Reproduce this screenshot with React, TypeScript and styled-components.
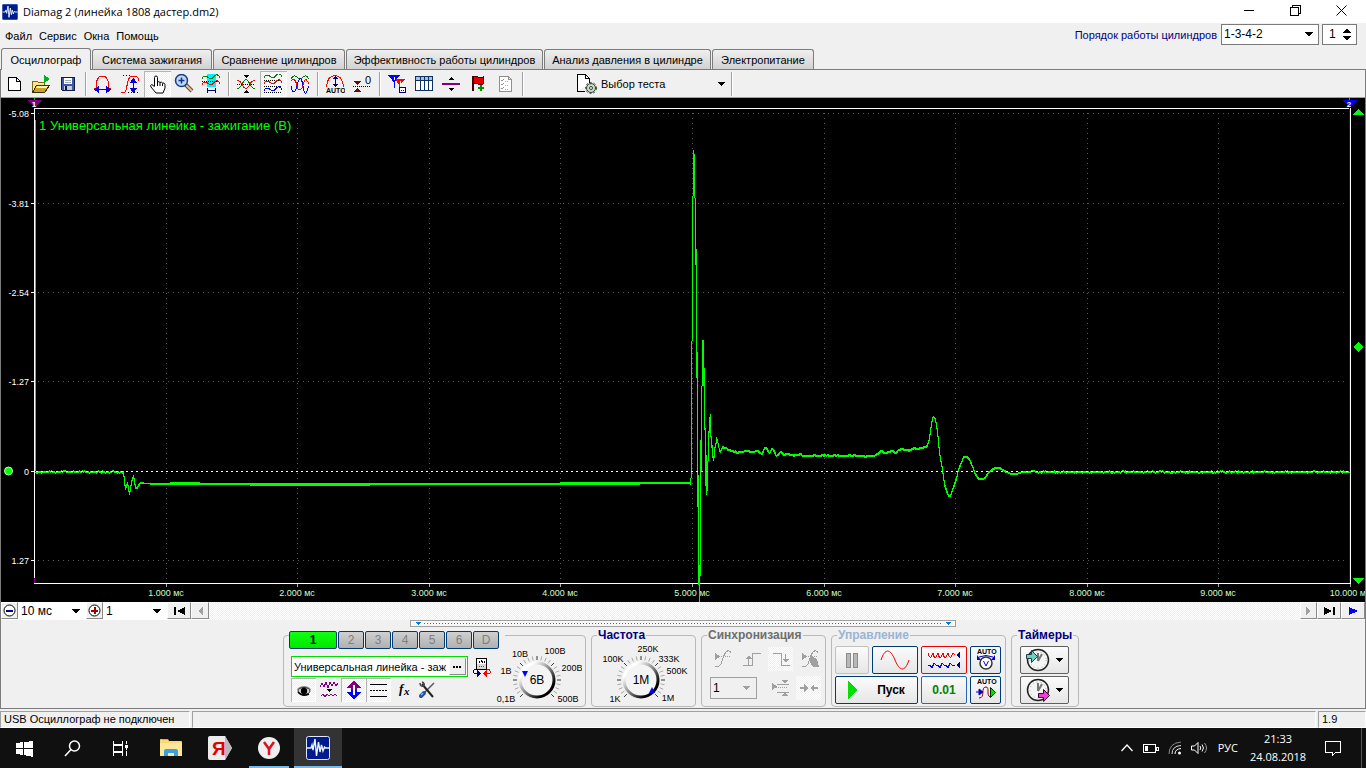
import React from "react";
import styled, { createGlobalStyle, css } from "styled-components";

const GlobalStyle = createGlobalStyle`
  *, *::before, *::after { box-sizing: border-box; }
  body { margin: 0; background: #f0f0f0; }
  button, input, select { font: inherit; color: inherit; }
`;

const hatch = css`
  background: repeating-conic-gradient(#ffffff 0 25%, #efefef 0 50%) 0 0 / 2px 2px;
`;
const sunken = css`
  ${hatch}
  box-shadow: inset 1px 1px 0 #b4b4b4, inset -1px -1px 0 #fff;
`;

const Window = styled.div`
  display: flex;
  flex-direction: column;
  min-height: 100vh;
  background: #f0f0f0;
  color: #000;
  font: 11px/14px "Liberation Sans", Arial, sans-serif;
`;

/* ---------- title bar ---------- */
const TitleBar = styled.header`
  display: flex;
  align-items: center;
  height: 23px;
  padding: 0 17px 0 2px;
  background: #fff;
`;
const Title = styled.h1`
  flex: 1;
  margin: 0 0 0 5px;
  font: 400 11px/16px "Open Sans", sans-serif;
`;
const CaptionButtons = styled.div`
  display: flex;
  gap: 30px;
  padding-bottom: 2px;
`;
const PlainButton = styled.button`
  display: flex;
  align-items: center;
  justify-content: center;
  padding: 0;
  border: 0;
  background: none;
`;
const CaptionButton = styled(PlainButton)`
  width: 16px;
  height: 20px;
`;

/* ---------- menu ---------- */
const MenuBar = styled.div`
  display: flex;
  align-items: center;
  justify-content: space-between;
  height: 25px;
  padding: 0 9px 0 5px;
`;
const Menu = styled.nav`
  display: flex;
  gap: 7px;
`;
const Order = styled.div`
  display: flex;
  align-items: center;
  gap: 3px;
  padding-bottom: 3px;
`;
const OrderLabel = styled.label`
  padding: 2px 1px 0 0;
  color: #000080;
`;
const Drop = styled.span<{ $w: number; $h: number; $line?: string; $bg?: string }>`
  display: inline-grid;
  grid-template-columns: 1fr 13px;
  align-items: center;
  width: ${(p) => p.$w}px;
  height: ${(p) => p.$h}px;
  border: 1px solid ${(p) => p.$line || "#7a7a7a"};
  background: ${(p) => p.$bg || "#fff"};
  & > select {
    grid-area: 1 / 1 / 2 / 3;
    width: 100%;
    height: 100%;
    padding: 0 0 0 2px;
    border: 0;
    background: none;
    appearance: none;
    color: #000;
    font-size: 12px;
  }
  & > svg { grid-area: 1 / 2; pointer-events: none; }
`;
const Spin = styled.span`
  display: flex;
  align-items: center;
  width: 35px;
  height: 21px;
  border: 1px solid #7a7a7a;
  background: #fff;
  & > input {
    width: 20px;
    padding: 0 0 0 6px;
    border: 0;
    background: none;
    font-size: 12px;
  }
`;

/* ---------- tabs ---------- */
const Tabs = styled.div`
  display: flex;
  align-items: flex-end;
  gap: 1px;
  height: 22px;
  padding-left: 1px;
  border-bottom: 1px solid #7c7c7c;
`;
const Tab = styled.button<{ $w: number; $on?: boolean }>`
  width: ${(p) => p.$w}px;
  height: ${(p) => (p.$on ? 22 : 20)}px;
  margin-bottom: ${(p) => (p.$on ? -1 : 0)}px;
  padding: 0;
  border: 1px solid #7c7c7c;
  border-bottom: 0;
  border-radius: 3px 3px 0 0;
  background: ${(p) => (p.$on ? "#f0f0f0" : "linear-gradient(#efefef, #d2d2d2)")};
  white-space: nowrap;
`;
const Frame = styled.main`
  display: flex;
  flex: 1;
  flex-direction: column;
  border: solid #7c7c7c;
  border-width: 0 1px 1px;
`;

/* ---------- toolbar ---------- */
const Toolbar = styled.div`
  display: flex;
  align-items: center;
  height: 28px;
  padding-top: 1px;
  border-bottom: 1px solid #a0a0a0;
`;
const Tool = styled(PlainButton)<{ $on?: boolean }>`
  width: 27px;
  height: 26px;
  padding-right: 1px;
  ${(p) => p.$on && sunken}
`;
const Sep = styled.i`
  width: 2px;
  height: 24px;
  margin: 0 3px;
  border-left: 1px solid #a0a0a0;
  border-right: 1px solid #fff;
`;
const TestButton = styled(PlainButton)`
  width: 152px;
  height: 26px;
  margin-left: 49px;
  padding: 0 3px 0 1px;
  gap: 4px;
  & > span { flex: 1; text-align: left; }
`;
const Chart = styled.svg`
  display: block;
  width: 100%;
  height: auto;
  background: #000;
`;

/* ---------- time navigation ---------- */
const NavRow = styled.div`
  display: flex;
  height: 18px;
  background: #fff;
`;
const Raised = styled(PlainButton)<{ $w: number }>`
  flex: none;
  width: ${(p) => p.$w}px;
  height: 17px;
  border: 1px solid;
  border-color: #fff #8a8a8a #8a8a8a #fff;
  background: #f0f0f0;
`;
const Track = styled.div`
  flex: 1;
  ${hatch}
`;

/* ---------- control panels ---------- */
const Panels = styled.div`
  display: flex;
  flex: 1;
  flex-direction: column;
  align-items: center;
`;
const Splitter = styled.div`
  display: flex;
  align-items: center;
  justify-content: space-between;
  width: 40%;
  height: 7px;
  padding: 0 4px;
  border: 1px solid #a0a0a0;
  background: #f7f7f7;
`;
const Dots = styled.span`
  flex: 1;
  height: 1px;
  margin: 0 3px;
  background: repeating-linear-gradient(90deg, #0078d7 0 1px, transparent 1px 3px);
`;
const Groups = styled.div`
  display: flex;
  gap: 5px;
  padding: 2px 4px 0 0;
`;
const Group = styled.fieldset<{ $w: number }>`
  display: flex;
  width: ${(p) => p.$w}px;
  height: 78px;
  min-width: 0;
  margin: 0;
  padding: 0;
  border: 1px solid #b9b9b9;
  border-radius: 4px;
`;
const Legend = styled.legend<{ $ink: string }>`
  height: 13px;
  margin-left: 5px;
  padding: 0 1px;
  color: ${(p) => p.$ink};
  font: bold 12px/13px "Liberation Sans", Arial, sans-serif;
  white-space: nowrap;
`;
const Channels = styled(Legend)`
  display: flex;
  gap: 1px;
  padding: 2px 6px 0 0;
`;
const Channel = styled.button<{ $on?: boolean }>`
  flex: none;
  width: ${(p) => (p.$on ? 48 : 26)}px;
  height: 18px;
  padding: 0;
  border: 1px solid #003c74;
  border-radius: 2px;
  background: ${(p) => (p.$on ? "linear-gradient(#10ff10, #00e800)" : "linear-gradient(#d0d0d0, #b0b0b0)")};
  color: ${(p) => (p.$on ? "#000" : "#808080")};
  font-weight: ${(p) => (p.$on ? 700 : 400)};
`;
const Column = styled.div<{ $gap?: number; $pad?: string }>`
  display: flex;
  flex-direction: column;
  gap: ${(p) => p.$gap || 0}px;
  padding: ${(p) => p.$pad || 0};
`;
const Row = styled.div<{ $gap?: number }>`
  display: flex;
  align-items: center;
  gap: ${(p) => p.$gap || 0}px;
`;
const Probe = styled.span`
  display: flex;
  align-items: center;
  gap: 3px;
  width: 177px;
  height: 21px;
  padding: 0 1px 0 2px;
  border: 1px solid #00e000;
  background: #fff;
  & > input {
    flex: 1;
    min-width: 0;
    padding: 0;
    border: 0;
    background: none;
  }
`;
const SmallTool = styled(PlainButton)<{ $on?: boolean; $flat?: boolean; $w?: number }>`
  width: ${(p) => p.$w || 25}px;
  height: 24px;
  ${(p) => p.$on && (p.$flat ? hatch : sunken)}
`;
const Push = styled.button<{ $w: number; $line: string; $ink?: string }>`
  display: flex;
  align-items: center;
  justify-content: center;
  width: ${(p) => p.$w}px;
  height: 28px;
  padding: 0;
  border: 1px solid ${(p) => p.$line};
  border-radius: 2px;
  background: linear-gradient(#fbfbfb, #e6e6e6);
  color: ${(p) => p.$ink || "#000"};
  font-size: 12px;
  font-weight: 700;
`;

/* ---------- status bar ---------- */
const StatusBar = styled.footer`
  display: flex;
  gap: 2px;
  height: 19px;
  padding-top: 2px;
`;
const Cell = styled.div<{ $w?: number }>`
  ${(p) => (p.$w ? `width: ${p.$w}px` : "flex: 1")};
  padding: 0 3px;
  border: 1px solid;
  border-color: #a0a0a0 #fff #fff #a0a0a0;
  line-height: 15px;
  white-space: nowrap;
`;

/* ---------- task bar ---------- */
const TaskBar = styled.nav`
  display: flex;
  align-items: center;
  height: 40px;
  background: #101010;
  color: #fff;
  font: 11px/18px "Open Sans", sans-serif;
`;
const Apps = styled.div`
  display: flex;
  flex: 1;
  gap: 1px;
`;
const Task = styled(PlainButton)<{ $active?: boolean; $open?: boolean }>`
  position: relative;
  width: 48px;
  height: 40px;
  background: ${(p) => (p.$active ? "#333" : "none")};
  &::after {
    content: "";
    display: ${(p) => (p.$active || p.$open ? "block" : "none")};
    position: absolute;
    bottom: 0;
    left: ${(p) => (p.$active ? 0 : 4)}px;
    right: ${(p) => (p.$active ? 0 : 4)}px;
    height: 2px;
    background: #76b9ed;
  }
`;
const SystemTasks = styled.div`
  display: flex;
  width: 146px;
`;
const Tray = styled.div`
  display: flex;
  align-items: center;
  height: 40px;
  gap: 9px;
`;
const Clock = styled.time`
  width: 62px;
  text-align: center;
`;
const NoticeButton = styled(PlainButton)`
  padding-left: 7px;
`;
const ShowDesktop = styled(PlainButton)`
  width: 5px;
  height: 40px;
  margin-left: 10px;
  border-left: 1px solid #555;
`;

/* ---------- icons ---------- */
type IcoProps = { w?: number; h?: number; smooth?: boolean; children: React.ReactNode };
const Ico = ({ w = 20, h = 20, smooth, children }: IcoProps) => (
  <svg width={w} height={h} viewBox={`0 0 ${w} ${h}`} fill="none" aria-hidden="true" shapeRendering={smooth ? "auto" : "crispEdges"}>
    {children}
  </svg>
);
const Down = () => <Ico w={8} h={5}><path d="M0 0h8L4 5z" fill="#000" /></Ico>;
const SmallDown = ({ c = "#000" }: { c?: string }) => <Ico w={7} h={4}><path d="M0 0h7L3.500 4z" fill={c} /></Ico>;
const AppIcon = ({ s = 16 }: { s?: number }) => (
  <svg width={s} height={s} viewBox="0 0 24 24" fill="none" aria-hidden="true">
    <rect x="0.500" y="0.500" width="23" height="23" rx="2" fill="#001c8c" stroke={s > 16 ? "#dfe8ff" : "#3050b0"} />
    <path d="M1 12h4l1-3 1 5 2-11 1.500 17 2-14 1.500 10 1.500-7 1.500 6 1.500-4 1 1h4" stroke="#e8f4ff" strokeWidth="1.400" />
  </svg>
);

const wave = (y: number, c: string) => (
  <path d={`M1 ${y + 2}.5c2-3 4-3 6-1s4 2 6-1 4-2 6 1`} stroke={c} />
);
const dots = (y: number) => <path d={`M1 ${y}.5h18`} stroke="#000" strokeDasharray="1 1" />;
const tiny = { fontFamily: "Liberation Sans, Arial, sans-serif", fontWeight: 700 };

const IcoNew = () => <Ico><path d="M4.500 3.500h8l4 4v9h-12z" fill="#fff" stroke="#000" /><path d="M12.500 3.500v4h4" stroke="#000" /></Ico>;
const IcoOpen = () => (
  <Ico>
    <path d="M1.500 17V7.500h5l1 1h6V11" fill="#ffe58a" stroke="#7a6a20" />
    <path d="M1.500 18.500l4-7h13l-5 7z" fill="#c8a030" stroke="#3a3000" />
    <path d="M6 12h11l-1 2H5z" fill="#fff3b0" />
    <path d="M13 1l6 4-6 4z" fill="#00b020" />
  </Ico>
);
const IcoSave = () => (
  <Ico>
    <path d="M3.500 3.500h13v13h-12l-1-1z" fill="#3c5aa8" stroke="#101c48" />
    <path d="M6 4h8v6H6z" fill="#fff" /><path d="M7 6.500h6M7 8.500h6" stroke="#9ab" />
    <path d="M6 12h8v4H6z" fill="#c8ccd8" /><path d="M7 12h2v4H7z" fill="#101c48" />
  </Ico>
);
const IcoBell = () => (
  <Ico>
    <path d="M1 14.500h2C3 7 4 2 9 2s7 5 7 12.500h2" stroke="#f00" />
    <path d="M2 15.500h15" stroke="#0000e0" /><path d="M1 15.500l5-4v8zM18 15.500l-5-4v8z" fill="#0000e0" />
  </Ico>
);
const IcoStep = () => (
  <Ico>
    <path d="M1 18.500h3C8 18 6 4 11 2.500h4q3 0 4 4" stroke="#f00" />
    <path d="M3 1.500h8M8 18.500h11" stroke="#000" strokeDasharray="1 2" />
    <path d="M13.500 5v12" stroke="#0000e0" /><path d="M13.500 4l4 5h-8zM13.500 19l4-5h-8z" fill="#0000e0" />
  </Ico>
);
const IcoHand = () => (
  <Ico smooth>
    <path d="M7.500 12V3.500q0-1.500 1.500-1.500t1.500 1.500V8q1.500-1 2.500.500 1.500-1 2.500.500 2-.5 2.500 1.500V14l-2 5h-7L4 13q-1-2 .5-2.300T7.500 13" fill="#fff" stroke="#000" />
    <path d="M10.500 8v4M13 8.500V12M15.500 9.500V12" stroke="#000" />
  </Ico>
);
const IcoZoom = () => (
  <Ico smooth>
    <path d="M11 10l7 7" stroke="#5a4a3a" strokeWidth="4" /><path d="M12 11l6 6" stroke="#e8c090" strokeWidth="2" />
    <circle cx="7.500" cy="6.500" r="6" fill="#b9dcf4" stroke="#1c3c80" strokeWidth="1.500" />
    <path d="M4.500 6.500h6M7.500 3.500v6" stroke="#1030a0" strokeWidth="1.500" />
  </Ico>
);
const IcoSpan = () => (
  <Ico>
    <path d="M6 0h9v13H6z" fill="#00f0ff" />
    {wave(2, "#008000")}{dots(7)}{wave(8, "#f00")}
    <path d="M6.500 14v5M14.500 14v5M7 16.500h8" stroke="#000080" />
  </Ico>
);
const IcoCross = () => (
  <Ico>
    <path d="M1 6.500c6 0 5 8 9 8s3-8 9-8" stroke="#f00" /><path d="M1 14.500c6 0 5-9 9-9s3 9 9 9" stroke="#008000" />
    {dots(10)}<path d="M7 1h6l-3 3zM7 19h6l-3-3z" fill="#000" />
  </Ico>
);
const IcoThree = () => <Ico>{wave(1, "#008000")}{dots(6)}{wave(7, "#f00")}{dots(12)}{wave(14, "#0000ff")}{dots(18)}</Ico>;
const IcoMix = () => (
  <Ico>
    <path d="M1 5q3-5 6-2t6 0 6 2" stroke="#008000" />
    <path d="M1 7c3-4 5 0 6 5s4 6 6-1 3-7 6-1" stroke="#f00" />
    <path d="M1 12c1 8 4 8 6 0s4-12 6 0 3 7 6 0" stroke="#00f" />
  </Ico>
);
const IcoAuto = () => (
  <Ico>
    <path d="M1.500 13C2 7 4 1.500 10 1.500S18 7 18.500 13" stroke="#f00" />
    <path d="M10.500 3v9" stroke="#000080" /><path d="M10.500 2l3 3h-6zM10.500 13l3-3h-6z" fill="#000080" />
    <text x="1" y="19" fontSize="7" fill="#000" {...tiny}>AUTO</text>
  </Ico>
);
const IcoZero = () => (
  <Ico>
    <path d="M1 7h8l-4 4zM1 18h8l-4-4z" fill="#800000" />{dots(12)}
    <text x="13" y="10" fontSize="11" fill="#000" fontFamily="Liberation Sans, Arial, sans-serif">0</text>
  </Ico>
);
const IcoMarks = () => (
  <Ico>
    <path d="M8 5h10l-5 6v5h-1v-5z" fill="#f00" /><path d="M1 1h12L7.500 8v6h-1V8z" fill="#00f" />
    <path d="M7 3v3M13 7v3" stroke="#fff" /><path d="M12.500 13.500h6v5h-6z" fill="#fff" stroke="#000080" /><path d="M14 16.500h3" stroke="#000080" strokeDasharray="1 1" />
  </Ico>
);
const IcoTable = () => (
  <Ico>
    <path d="M1.500 2.500h17v14h-17z" fill="#fff" stroke="#103060" /><path d="M2 3h16v3H2z" fill="#9cc4ee" />
    <path d="M2 6.500h16M6.500 3v13M10.500 3v13M14.500 3v13" stroke="#103060" />
  </Ico>
);
const IcoLine = () => <Ico><path d="M1 9h18v2H1z" fill="#800080" /><path d="M7 6h6l-3-3zM7 14h6l-3 3z" fill="#000" /></Ico>;
const IcoFlag = () => (
  <Ico>
    <path d="M4.500 2v15" stroke="#400" strokeWidth="2" /><path d="M5 3q3-2 5 0t5 0v7q-3 2-5 0t-5 0z" fill="#e00000" stroke="#500" />
    <path d="M10 14h6M13 11v6" stroke="#009000" strokeWidth="2" />
  </Ico>
);
const IcoCheck = () => (
  <Ico>
    <path d="M4.500 2.500h9l3 3v12h-12z" fill="#fff" stroke="#909090" /><path d="M13.500 2.500v3h3" stroke="#909090" />
    <path d="M6 6l1 1 2-2M6 10l1 1 2-2M6 14l1 1 2-2" stroke="#909090" /><path d="M10 7.500h4M10 11.500h4M10 15.500h4" stroke="#b0b0b0" strokeDasharray="1 1" />
  </Ico>
);
const IcoTest = () => (
  <Ico smooth>
    <path d="M.5 17.500V.5h8l4 4V9M.5 17.500H8" fill="#fff" stroke="#000" shapeRendering="crispEdges" /><path d="M8.500.5v4h4" stroke="#000" shapeRendering="crispEdges" />
    <circle cx="14" cy="14" r="4.500" fill="#c8dcc8" stroke="#304030" strokeWidth="1" />
    <circle cx="14" cy="14" r="5.500" stroke="#304030" strokeDasharray="2 2" /><circle cx="14" cy="14" r="1.500" fill="#fff" stroke="#304030" />
  </Ico>
);
const IcoSign = ({ plus }: { plus?: boolean }) => (
  <Ico w={15} h={15}>
    <circle cx="7.500" cy="7.500" r="5.500" fill="#fff" stroke="#000" shapeRendering="auto" />
    <path d="M4 7h7v2H4z" fill={plus ? "#a00000" : "#000080"} />
    {plus && <path d="M7 4h2v7H7z" fill="#a00000" />}
  </Ico>
);

const IcoProbe = () => (
  <Ico>
    <path d="M4.500 1.500h10v11h-10z" fill="#d8d8d8" stroke="#000" /><path d="M5 2h9v5H5z" fill="#fff" /><path d="M7 6V4h1M9 3l2 3M12 4v2" stroke="#000" />
    <path d="M7 9.500h5" stroke="#555" strokeDasharray="1 1" />
    <path d="M4 12.500H2.500q-2 3 0 4H6" stroke="#000080" /><path d="M5 13v7l4-3.500z" fill="#000080" />
    <path d="M15 12.500h2q3 3 0 4h-3" stroke="#f00" /><path d="M15 13v7l-4-3.500z" fill="#f00" />
  </Ico>
);
const IcoEye = () => (
  <Ico smooth>
    <path d="M4 8q6-4 12 0l1 2H3z" fill="#8a8a7a" /><ellipse cx="10" cy="11" rx="6" ry="3.500" fill="#d8d8d8" stroke="#333" />
    <circle cx="10" cy="11" r="3.200" fill="#000" /><path d="M4 12q4 5 11 2" stroke="#000" strokeWidth="1.500" />
  </Ico>
);
const IcoCompare = () => (
  <Ico>
    <path d="M1 7l2-4 2 4 2-5 2 6 2-6 2 4 2-4 2 4 2-3" stroke="#800080" /><path d="M2 16l2-2 2 3 2-3 2 2 2-2 2 2 2-2 2 2" stroke="#800080" />
    <path d="M8 9h5l-2.500 3z" fill="#000" />
  </Ico>
);
const IcoUpDown = () => (
  <Ico>
    <path d="M10 0l7 8h-4v2H7V8H3z" fill="#800080" /><path d="M10 20l7-8h-4v-2H7v2H3z" fill="#00f" /><path d="M10 5v10" stroke="#fff" strokeWidth="2" />
  </Ico>
);
const IcoLines = () => <Ico><path d="M1 4.500h17M1 16.500h17" stroke="#000" /><path d="M1 10.500h17" stroke="#000" strokeDasharray="2 1" /></Ico>;
const IcoTools = () => (
  <Ico smooth>
    <path d="M17 3L7 13" stroke="#555" strokeWidth="1.500" /><path d="M7 13l-3 3" stroke="#2050a0" strokeWidth="4" strokeLinecap="round" /><path d="M6 13l-2 2" stroke="#8ab4f0" strokeWidth="1.500" />
    <path d="M5 4l11 13" stroke="#222" strokeWidth="2" /><path d="M3 3q0 4 4 3M5 2q3 1 2 4" stroke="#444" strokeWidth="1.500" />
  </Ico>
);
const SG = "#a0a0a0";
const IcoSyncWave = ({ hand }: { hand?: boolean }) => (
  <Ico>
    <path d="M2 4l5 3.500L2 11z" fill={SG} /><path d="M6 7.500h12" stroke={SG} strokeDasharray="1 1" />
    <path d="M2 17.500h3c4 0 4-8 7-13q3-5 6-1" stroke={SG} />
    {hand && <path d="M10 7l3 1 4 2 2 8h-6l-3-5z" fill={SG} />}
  </Ico>
);
const IcoEdge = ({ fall }: { fall?: boolean }) => (
  <Ico>
    {fall
      ? <><path d="M2 4.500h8.500v12H19M14.500 5v8" stroke={SG} /><path d="M12 10h6l-3 4z" fill={SG} /></>
      : <><path d="M1 16.500h9.500v-12H19M6.500 8v8" stroke={SG} /><path d="M4 10h6L7 6z" fill={SG} /></>}
  </Ico>
);
const IcoLevels = () => (
  <Ico>
    <path d="M2 5l5 3.500L2 12z" fill={SG} /><path d="M7 6.500h12M7 14.500h12" stroke={SG} /><path d="M6 9.500h11" stroke={SG} strokeDasharray="1 1" />
    <path d="M11 2h7l-3 3zM11 18h7l-3-3z" fill={SG} />
  </Ico>
);
const IcoMeet = () => <Ico><path d="M1 9h4V6l4 4-4 4v-3H1zM19 9h-4V6l-4 4 4 4v-3h4z" fill={SG} /></Ico>;
const IcoPause = () => <Ico w={12} h={15}><path d="M.5.5h4v14h-4zM7.500.5h4v14h-4z" fill="#b8b8b8" stroke="#8c8c8c" /></Ico>;
const IcoSine = () => <Ico w={30} h={20} smooth><path d="M1 10C5-2 10-2 15 10s10 12 14 0" stroke="#f00000" /></Ico>;
const IcoStreams = () => (
  <Ico w={34} h={20}>
    <path d="M1 3q2 6 3 4l2-4q1 6 3 4l2-4q1 6 3 4l2-4q1 6 3 4l2-4q1 5 3 4l2-4 2 2" stroke="#f00000" />
    <path d="M1 15h2l2 3 2-5 2 2h2l2 3 2-5 2 2h2l2 3 2-5 2 2h3" stroke="#0000ff" /><path d="M33 2v6l-4-3zM33 12v6l-4-3z" fill="#000080" />
  </Ico>
);
const IcoAutoVolt = () => (
  <Ico w={22} h={24} smooth>
    <text x="2" y="6" fontSize="7" fill="#000" {...tiny}>AUTO</text>
    <path d="M4 9q7-3 14 0" stroke="#0000d0" /><path d="M2 7v5h4zM20 7v5h-4z" fill="#0000d0" />
    <circle cx="11" cy="15" r="6" fill="#fff" stroke="#333" strokeWidth="1.500" /><path d="M8.500 13l2.500 5 2.500-5" stroke="#0000d0" />
  </Ico>
);
const IcoAutoRun = () => (
  <Ico w={22} h={24} smooth>
    <text x="2" y="6" fontSize="7" fill="#000" {...tiny}>AUTO</text>
    <path d="M1 14h3M4 11l4 3-4 3z" stroke="#0000d0" fill="#0000d0" /><path d="M4 20c7 0 1-11 7-11 4 0 0 8 4 10" stroke="#900000" />
    <path d="M15.500 9.500v10l5-5z" fill="#00e000" stroke="#003000" />
  </Ico>
);
const IcoTimer = ({ out }: { out?: boolean }) => (
  <Ico w={24} h={24} smooth>
    <circle cx="12" cy="12" r="10.500" fill="#f4f4f4" stroke="#222" strokeWidth="1.500" />
    <circle cx="12" cy="12" r="8" stroke="#aaa" strokeDasharray="1 3" /><path d="M12 13V5M12 13l4-7" stroke="#777" strokeWidth="2" />
    {out ? <path d="M12.500 15.500h5v-4l6 6-6 6v-4h-5z" fill="#f040d0" stroke="#400040" /> : <path d="M.5 6.500h5v-4l6 6-6 6v-4h-5z" fill="#70d0c0" stroke="#204040" />}
  </Ico>
);

/* ---------- knobs ---------- */
type KnobLabel = [string, number, number];
type KnobProps = { w: number; cx: number; cy: number; value: string; labels: KnobLabel[]; px: number; py: number; turn: number };
const Knob = ({ w, cx, cy, value, labels, px, py, turn }: KnobProps) => {
  const ticks = Array.from({ length: 25 }, (_, i) => (135 + i * 11.25) * (Math.PI / 180));
  return (
    <svg width={w} height={64} viewBox={`0 0 ${w} 64`} fill="none" role="img" aria-label={value}>
      <defs>
        <linearGradient id={`rim${cx}`} x1="0" y1="0" x2="1" y2="1">
          <stop offset="0.2" stopColor="#fff" /><stop offset="0.5" stopColor="#888" /><stop offset="0.8" stopColor="#000" />
        </linearGradient>
      </defs>
      {ticks.map((a, i) => (
        <path key={i} d={`M${cx + Math.cos(a) * 20} ${cy + Math.sin(a) * 20}L${cx + Math.cos(a) * 24} ${cy + Math.sin(a) * 24}`} stroke={i % 4 === 0 ? "#333" : "#a8a8a8"} />
      ))}
      <circle cx={cx} cy={cy} r="17" fill="#f4f4f4" stroke={`url(#rim${cx})`} strokeWidth="3" />
      <path d="M-3 3L3 3L0 -3z" fill="#00f" transform={`translate(${px} ${py}) rotate(${turn})`} />
      <text x={cx} y={cy + 4} fontSize="12" textAnchor="middle" fill="#000">{value}</text>
      {labels.map(([t, x, y]) => <text key={t} x={x} y={y} fontSize="9" textAnchor="middle" fill="#000">{t}</text>)}
    </svg>
  );
};

/* ---------- oscilloscope trace ---------- */
type Pt = [number, number];
const noise = (x: number) => {
  const v = Math.sin(x * 12.9898) * 43758.5453;
  return v - Math.floor(v);
};
/* Adds the converter's one-step jitter between the listed points. */
const jitter = (pts: Pt[]): string => {
  const out: string[] = [];
  for (let i = 0; i < pts.length - 1; i++) {
    const [x0, y0] = pts[i];
    const [x1, y1] = pts[i + 1];
    for (let x = x0; x < x1; x++) {
      const n = noise(x);
      out.push(`${x}.5 ${Math.round(y0 + ((y1 - y0) * (x - x0)) / (x1 - x0)) + (n > 0.85 ? 1 : n < 0.12 ? -1 : 0)}`);
    }
  }
  return "M" + out.join("L");
};
const line = (pts: Pt[]) => "M" + pts.map((p) => `${p[0]}.5 ${p[1]}`).join("L");

const rest: Pt[] = [[35, 472], [124, 472]];
const dwellStart: Pt[] = [[123, 472], [125, 489], [127, 482], [129, 494], [131, 482], [133, 475], [135, 487], [137, 487], [140, 482], [143, 483]];
/* Ignition spike: one vertical run of samples per screen column, [x, top, bottom]. */
const spike: [number, number, number][] = [
  [690, 478, 485], [691, 341, 478], [692, 196, 341], [693, 150, 196], [694, 154, 198], [695, 198, 265], [696, 249, 378],
  [697, 352, 507], [698, 475, 585], [699, 565, 602], [700, 440, 576], [701, 386, 472], [702, 340, 386], [703, 340, 368],
  [703, 368, 386], [704, 368, 430], [705, 428, 486], [706, 455, 495], [707, 461, 491], [708, 431, 461], [709, 417, 433],
  [710, 414, 437], [711, 436, 448], [712, 445, 458], [713, 456, 461], [714, 447, 458], [715, 443, 448], [716, 437, 444],
  [717, 439, 443], [718, 443, 448], [719, 448, 452], [720, 450, 453], [721, 448, 451], [722, 446, 449],
];
const burn: Pt[] = [[722, 446], [728, 449], [737, 452], [745, 450], [753, 451], [757, 450], [761, 453], [765, 447], [769, 452], [772, 448], [776, 456], [780, 452], [784, 454], [793, 454], [810, 455], [860, 455], [867, 456], [875, 455], [881, 450], [884, 453], [888, 451], [892, 450], [896, 452], [901, 448], [905, 449], [917, 448], [925, 446], [928, 445]];
const ringing: Pt[] = [[927, 445], [929, 438], [931, 424], [932, 418], [933, 416], [935, 419], [937, 431], [939, 452], [942, 469], [944, 484], [947, 493], [948, 495], [950, 495], [953, 487], [956, 478], [958, 469], [961, 462], [963, 457], [966, 456], [969, 459], [972, 466], [975, 474], [978, 478], [982, 479], [985, 477], [988, 472], [992, 469], [996, 467], [1000, 468], [1005, 471], [1012, 474], [1018, 473], [1023, 471], [1029, 471]];
const tail: Pt[] = [[1029, 471], [1040, 472], [1350, 472]];

const levels: [string, number][] = [["-5.08", 113], ["-3.81", 203], ["-2.54", 292], ["-1.27", 381], ["0", 471], ["1.27", 560]];
const times = [166, 297, 429, 560, 692, 824, 955, 1087, 1218, 1350];

const Scope = () => (
  <Chart viewBox="1 98 1364 504" shapeRendering="crispEdges" fill="none" role="img" aria-label="Осциллограмма">
    <g stroke="#5a5a5a" strokeDasharray="1 4">
      {levels.filter(([t]) => t !== "0").map(([t, y]) => <path key={t} d={`M38 ${y}.5H1348`} />)}
      {times.slice(0, 9).map((x) => <path key={x} d={`M${x}.5 113V583`} />)}
    </g>
    <path d="M34.500 108v475M34 108.500h1317M34 583.500h1317M1350.500 108v475" stroke="#fff" />
    <path d="M1349.500 108v475" stroke="#0000ff" />
    <path d="M35.500 120v351" stroke="#00ff00" />
    <path d="M34.500 578v5" stroke="#800080" />
    <path d="M34.500 98v4M1349.500 98v4" stroke="#00c000" />
    <path d="M27 100h15l-7 8z" fill="#800080" />
    <path d="M1342 100h15l-7 8z" fill="#0000ff" />
    <g fontSize="8" fontWeight="700" fill="#fff" textAnchor="middle"><text x="34" y="107">1</text><text x="1349" y="107">2</text></g>
    {levels.map(([t, y]) => (
      <g key={t}>
        <path d={`M31 ${y}.5h4`} stroke="#fff" />
        <text x="29" y={y + 4} fontSize="9" textAnchor="end" fill="#fff">{t}</text>
      </g>
    ))}
    {times.map((x, i) => (
      <g key={x}>
        <path d={`M${x}.5 584v3`} stroke="#aaa" />
        <text x={x} y="596" fontSize="9" textAnchor="middle" fill="#c8ffc8">{`${i + 1}.000 мс`}</text>
      </g>
    ))}
    <g stroke="#00ff00" strokeLinejoin="bevel">
      <path d={jitter(rest)} strokeWidth="2" />
      <path d={line(dwellStart)} />
      <path d={line(dwellStart)} transform="translate(0 1)" />
      <path d="M143 483.500H690M150 484.500H640M170 482.500h30M250 485.500h120M560 482.500h130" />
      <path d={spike.map(([x, a, b]) => `M${x}.5 ${a}V${b}`).join("")} />
      {[0, 1].map((dy) => (
        <g key={dy} transform={`translate(0 ${dy})`}>
          <path d={jitter(burn)} />
          <path d={line(ringing)} />
        </g>
      ))}
      <path d={jitter(tail)} strokeWidth="2" />
    </g>
    <path d="M36 471.500H1349" stroke="#fff" strokeDasharray="2 3" />
    <text x="39" y="130" fontSize="13" fill="#00ff00">1</text>
    <text x="50" y="130" fontSize="13" fill="#00ff00">Универсальная линейка - зажигание (В)</text>
    <circle cx="8.500" cy="471" r="4" fill="#00ff00" stroke="#c0ffc0" shapeRendering="auto" />
    <path d="M1353 115h11l-5.500-6zM1353 578h11l-5.500 6zM1353 347l5.500-5 5.500 5-5.500 5z" fill="#00ff00" />
  </Chart>
);

const tabs: [string, number][] = [
  ["Система зажигания", 120], ["Сравнение цилиндров", 132], ["Эффективность работы цилиндров", 197],
  ["Анализ давления в цилиндре", 167], ["Электропитание", 102],
];
const navy = "#003c74";

export default function App() {
  return (
    <Window>
      <GlobalStyle />
      <TitleBar>
        <AppIcon />
        <Title>Diamag 2 (линейка 1808 дастер.dm2)</Title>
        <CaptionButtons>
          <CaptionButton aria-label="Свернуть"><Ico w={11} h={11}><path d="M0 5.500h10" stroke="#000" /></Ico></CaptionButton>
          <CaptionButton aria-label="Восстановить"><Ico w={11} h={11}><path d="M.5 2.500h8v8h-8zM2.500 2V.5h8v8H9" stroke="#000" /></Ico></CaptionButton>
          <CaptionButton aria-label="Закрыть"><Ico w={11} h={11} smooth><path d="M.5.5l10 10M10.500.5l-10 10" stroke="#000" /></Ico></CaptionButton>
        </CaptionButtons>
      </TitleBar>
      <MenuBar>
        <Menu>
          {["Файл", "Сервис", "Окна", "Помощь"].map((m) => <PlainButton key={m}>{m}</PlainButton>)}
        </Menu>
        <Order>
          <OrderLabel htmlFor="order">Порядок работы цилиндров</OrderLabel>
          <Drop $w={98} $h={21}>
            <select id="order" defaultValue="1-3-4-2"><option>1-3-4-2</option></select>
            <Down />
          </Drop>
          <Spin>
            <input aria-label="Номер цилиндра" defaultValue="1" />
            <Ico w={9} h={13}><path d="M0 5h8L4 0zM0 8h8l-4 5z" fill="#000" /></Ico>
          </Spin>
        </Order>
      </MenuBar>
      <Tabs>
        <Tab $w={90} $on>Осциллограф</Tab>
        {tabs.map(([t, w]) => <Tab key={t} $w={w}>{t}</Tab>)}
      </Tabs>
      <Frame>
        <Toolbar>
          <Tool aria-label="Новый"><IcoNew /></Tool>
          <Tool aria-label="Открыть"><IcoOpen /></Tool>
          <Tool aria-label="Сохранить"><IcoSave /></Tool>
          <Sep />
          <Tool aria-label="По ширине"><IcoBell /></Tool>
          <Tool aria-label="По высоте"><IcoStep /></Tool>
          <Tool aria-label="Рука" $on><IcoHand /></Tool>
          <Tool aria-label="Лупа"><IcoZoom /></Tool>
          <Tool aria-label="Интервал"><IcoSpan /></Tool>
          <Sep />
          <Tool aria-label="К центру"><IcoCross /></Tool>
          <Tool aria-label="Раздельно" $on><IcoThree /></Tool>
          <Tool aria-label="Вместе"><IcoMix /></Tool>
          <Sep />
          <Tool aria-label="Автомасштаб"><IcoAuto /></Tool>
          <Tool aria-label="Ноль"><IcoZero /></Tool>
          <Sep />
          <Tool aria-label="Маркеры"><IcoMarks /></Tool>
          <Tool aria-label="Таблица"><IcoTable /></Tool>
          <Tool aria-label="Уровень"><IcoLine /></Tool>
          <Tool aria-label="Метка"><IcoFlag /></Tool>
          <Tool aria-label="Отчёт"><IcoCheck /></Tool>
          <Sep />
          <TestButton><IcoTest /><span>Выбор теста</span><SmallDown /></TestButton>
          <Sep />
        </Toolbar>
        <Scope />
        <NavRow>
          <Raised $w={17} aria-label="Уменьшить"><IcoSign /></Raised>
          <Drop $w={68} $h={18} $line="#fff"><select aria-label="Развёртка" defaultValue="10 мс"><option>10 мс</option></select><Down /></Drop>
          <Raised $w={17} aria-label="Увеличить"><IcoSign plus /></Raised>
          <Drop $w={64} $h={18} $line="#fff"><select aria-label="Масштаб" defaultValue="1"><option>1</option></select><Down /></Drop>
          <Raised $w={24} aria-label="В начало"><Ico w={11} h={8}><path d="M0 0h2v8H0zM11 0v8L3 4z" fill="#000" /></Ico></Raised>
          <Raised $w={18} aria-label="Назад"><Ico w={5} h={8}><path d="M5 0v8L0 4z" fill="#a0a0a0" /></Ico></Raised>
          <Track />
          <Raised $w={17} aria-label="Вперёд"><Ico w={5} h={8}><path d="M0 0v8l5-4z" fill="#a0a0a0" /></Ico></Raised>
          <Raised $w={24} aria-label="В конец"><Ico w={11} h={8}><path d="M9 0h2v8H9zM0 0v8l8-4z" fill="#000" /></Ico></Raised>
          <Raised $w={24} aria-label="Воспроизвести"><Ico w={9} h={8}><path d="M0 0v8l9-4z" fill="#0000ff" /></Ico></Raised>
        </NavRow>
        <Panels>
          <Splitter>
            <Ico w={6} h={3}><path d="M0 0h6L3 3z" fill="#0078d7" /></Ico>
            <Dots />
            <Ico w={6} h={3}><path d="M0 0h6L3 3z" fill="#0078d7" /></Ico>
          </Splitter>
          <Groups>
            <Group $w={303}>
              <Channels $ink="#000">
                <Channel $on>1</Channel>
                {["2", "3", "4", "5", "6", "D"].map((c) => <Channel key={c}>{c}</Channel>)}
              </Channels>
              <Column $gap={1} $pad="14px 0 0 7px">
                <Row $gap={4}>
                  <Probe>
                    <input aria-label="Датчик" defaultValue="Универсальная линейка - зажигание" />
                    <Raised $w={17} aria-label="Выбрать датчик"><Ico w={9} h={2}><path d="M0 0h2v2H0zM3 0h2v2H3zM6 0h2v2H6z" fill="#000" /></Ico></Raised>
                  </Probe>
                  <PlainButton aria-label="Подключение"><IcoProbe /></PlainButton>
                </Row>
                <Row>
                  <SmallTool $on aria-label="Показать"><IcoEye /></SmallTool>
                  <SmallTool aria-label="Сравнить"><IcoCompare /></SmallTool>
                  <SmallTool $on aria-label="Инверсия"><IcoUpDown /></SmallTool>
                  <SmallTool $on aria-label="Линии"><IcoLines /></SmallTool>
                  <SmallTool aria-label="Функция">
                    <Ico smooth>
                      <text x="5" y="13" fontSize="13" fontStyle="italic" fill="#000" fontFamily="Liberation Serif, serif" fontWeight="700">f</text>
                      <text x="10" y="15" fontSize="11" fontStyle="italic" fill="#000" fontFamily="Liberation Serif, serif" fontWeight="700">x</text>
                    </Ico>
                  </SmallTool>
                  <SmallTool $w={22} aria-label="Настройка"><IcoTools /></SmallTool>
                </Row>
              </Column>
              <Knob w={90} cx={45} cy={38} value="6В" px={33} py={32} turn={180}
                labels={[["0,1В", 14, 60], ["1В", 14, 32], ["10В", 28, 15], ["100В", 63, 12], ["200В", 80, 29], ["500В", 76, 60]]} />
            </Group>
            <Group $w={105}>
              <Legend $ink="#000080">Частота</Legend>
              <Knob w={103} cx={49} cy={38} value="1М" px={60} py={48} turn={0}
                labels={[["1K", 23, 60], ["100K", 21, 20], ["250K", 56, 10], ["333K", 77, 20], ["500K", 85, 32], ["1М", 76, 59]]} />
            </Group>
            <Group $w={125}>
              <Legend $ink="#6e6e6e">Синхронизация</Legend>
              <Column $gap={5} $pad="5px 0 0 8px">
                <Row $gap={4}>
                  <SmallTool aria-label="По уровню"><IcoSyncWave /></SmallTool>
                  <SmallTool aria-label="Фронт"><IcoEdge /></SmallTool>
                  <SmallTool $on $flat aria-label="Спад"><IcoEdge fall /></SmallTool>
                  <SmallTool aria-label="Вручную"><IcoSyncWave hand /></SmallTool>
                </Row>
                <Row $gap={8}>
                  <Drop $w={47} $h={22} $line="#a0a0a0" $bg="#f0f0f0">
                    <select aria-label="Канал" defaultValue="1"><option>1</option></select>
                    <SmallDown c={SG} />
                  </Drop>
                  <Row $gap={1}>
                    <SmallTool $w={30} aria-label="Уровни"><IcoLevels /></SmallTool>
                    <SmallTool $on $flat aria-label="Ждущий"><IcoMeet /></SmallTool>
                  </Row>
                </Row>
              </Column>
            </Group>
            <Group $w={175}>
              <Legend $ink="#9ab4d2">Управление</Legend>
              <Column $gap={2} $pad="4px 0 0 3px">
                <Row $gap={3}>
                  <Push $w={34} $line="#c0c0c0" aria-label="Пауза"><IcoPause /></Push>
                  <Push $w={46} $line={navy} aria-label="Однократно"><IcoSine /></Push>
                  <Push $w={46} $line="#f00000" aria-label="Непрерывно"><IcoStreams /></Push>
                  <Push $w={31} $line={navy} aria-label="Автодиапазон"><IcoAutoVolt /></Push>
                </Row>
                <Row $gap={3}>
                  <Push $w={83} $line={navy}>
                    <Row $gap={19}><Ico w={10} h={18}><path d="M0 0v18l10-9z" fill="#00e000" /></Ico>Пуск</Row>
                  </Push>
                  <Push $w={46} $line="#2868b0" $ink="#008000">0.01</Push>
                  <Push $w={31} $line={navy} aria-label="Автозапуск"><IcoAutoRun /></Push>
                </Row>
              </Column>
            </Group>
            <Group $w={68}>
              <Legend $ink="#000080">Таймеры</Legend>
              <Column $gap={2} $pad="4px 0 0 8px">
                <Push $w={49} $line="#606060" aria-label="Таймер запуска"><Row $gap={6}><IcoTimer /><SmallDown /></Row></Push>
                <Push $w={49} $line="#606060" aria-label="Таймер остановки"><Row $gap={6}><IcoTimer out /><SmallDown /></Row></Push>
              </Column>
            </Group>
          </Groups>
        </Panels>
      </Frame>
      <StatusBar>
        <Cell $w={190}>USB Осциллограф не подключен</Cell>
        <Cell />
        <Cell $w={48}>1.9</Cell>
      </StatusBar>
      <TaskBar>
        <Apps>
          <SystemTasks>
            <Task aria-label="Пуск"><Ico w={17} h={17}><path d="M0 3l7-1v6H0zM8 2l9-1v7H8zM0 9h7v6l-7-1zM8 9h9v8l-9-2z" fill="#fff" /></Ico></Task>
            <Task aria-label="Поиск"><Ico w={17} h={17} smooth><circle cx="10.500" cy="6" r="5" stroke="#fff" strokeWidth="1.500" /><path d="M7 9.500l-6 6.500" stroke="#fff" strokeWidth="1.500" /></Ico></Task>
            <Task aria-label="Представление задач"><Ico w={17} h={17}><path d="M1.500 1v3.500h9V1M1.500 16v-3.500h9V16M1.500 5.500h9v6h-9zM14.500 1v3M14.500 7v3M14.500 11v5" stroke="#fff" /><path d="M13 5h3v3h-3z" fill="#fff" /></Ico></Task>
          </SystemTasks>
          <Task aria-label="Проводник">
            <Ico w={22} h={20} smooth><path d="M0 2q0-1 1-1h7l1 2h12q1 0 1 1v14H0z" fill="#fbd775" /><path d="M0 5h22v13H0z" fill="#ffe79a" /><path d="M2 1h6v1H2z" fill="#e8a33d" /><path d="M4 18v-5q0-2 2-2h10q2 0 2 2v5h-4v-3H8v3z" fill="#3aa0e0" /></Ico>
          </Task>
          <Task aria-label="Яндекс">
            <Ico w={24} h={24} smooth><path d="M2 0h15l7 12-7 12H2q-2 0-2-2V2q0-2 2-2z" fill="#ececec" /><path d="M17 0l7 12-7 12z" fill="#b8b8b8" /><text x="4" y="19" fontSize="19" fill="#e00000" {...tiny}>Я</text></Ico>
          </Task>
          <Task $open aria-label="Яндекс Браузер">
            <Ico w={24} h={24} smooth><circle cx="12" cy="12" r="11" fill="#efefef" /><path d="M7 6l5 7 5-7M12 12v7" stroke="#e01020" strokeWidth="2.500" /></Ico>
          </Task>
          <Task $active aria-label="Diamag 2"><AppIcon s={24} /></Task>
        </Apps>
        <Tray>
          <Ico w={14} h={14} smooth><path d="M1.500 10L7 4l5.500 6" stroke="#fff" strokeWidth="1.300" /></Ico>
          <Ico w={16} h={14}><path d="M.5 3.500h12v8H.5zM13 6h2v3h-2z" stroke="#fff" /><path d="M2 5h3v5H2z" fill="#fff" /></Ico>
          <Ico w={14} h={14} smooth><g stroke="#888"><path d="M1 13Q1 2 13 1" /><path d="M4 13q0-8 9-8.500" stroke="#ddd" /><path d="M7 13q0-5 6-5.500" stroke="#fff" /></g><circle cx="11.500" cy="12" r="1.500" fill="#fff" /></Ico>
          <Ico w={18} h={14} smooth><path d="M.5 5h3L7 1.500v11L3.500 9h-3z" stroke="#fff" /><path d="M9 5q1.500 2 0 4M11 3.500q3 3.500 0 7" stroke="#fff" /><path d="M13.500 2q4 5 0 10" stroke="#999" /></Ico>
          <span>РУС</span>
          <Clock>21:33<br />24.08.2018</Clock>
          <NoticeButton aria-label="Уведомления"><Ico w={17} h={17}><path d="M.5 1.500h15v11h-5l-3 3v-3h-7z" stroke="#fff" /></Ico></NoticeButton>
          <ShowDesktop aria-label="Показать рабочий стол" />
        </Tray>
      </TaskBar>
    </Window>
  );
}
